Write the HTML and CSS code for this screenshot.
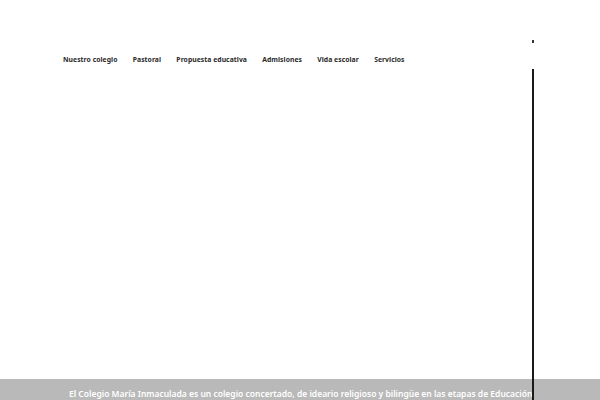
FILE: index.html
```html
<!DOCTYPE html>
<html lang="es">
<head>
<meta charset="utf-8">
<link rel="stylesheet" href="styles.css">
</head>
<body>
<div class="page">
  <header class="header">
    <nav class="nav">
      <a>Nuestro colegio</a>
      <a>Pastoral</a>
      <a>Propuesta educativa</a>
      <a>Admisiones</a>
      <a>Vida escolar</a>
      <a>Servicios</a>
    </nav>
  </header>
  <main class="hero"></main>
  <section class="band">
    <p class="band-text">El Colegio María Inmaculada es un colegio concertado, de ideario religioso y bilingüe en las etapas de Educación</p>
  </section>
  <span class="dot"></span>
  <span class="vline"></span>
</div>
</body>
</html>
```
FILE: styles.css
```css
html, body {
  margin: 0;
  padding: 0;
  background: #ffffff;
}
.page {
  position: relative;
  width: 600px;
  height: 400px;
  overflow: hidden;
  font-family: "Noto Sans", "DejaVu Sans", sans-serif;
  display: flex;
  flex-direction: column;
}
.header {
  height: 68px;
  padding-left: 63px;
  box-sizing: border-box;
  padding-top: 54px;
}
.nav {
  display: flex;
  gap: 15.3px;
}
.nav a {
  font-size: 6.8px;
  font-weight: 700;
  color: #2a2a2a;
  line-height: 12px;
  letter-spacing: 0.05px;
}
.hero {
  flex: 1;
}
.band {
  height: 21px;
  background: #b9b9b9;
  padding-left: 69px;
}
.band-text {
  margin: 0;
  padding-top: 9px;
  white-space: nowrap;
  color: #ffffff;
  font-size: 8.5px;
  font-weight: 600;
  line-height: 12px;
}
.dot {
  position: absolute;
  left: 532px;
  top: 40px;
  width: 1.5px;
  height: 3px;
  background: #333333;
}
.vline {
  position: absolute;
  left: 532px;
  top: 69px;
  bottom: 0;
  width: 1.5px;
  background: #1a1a1a;
}
```
